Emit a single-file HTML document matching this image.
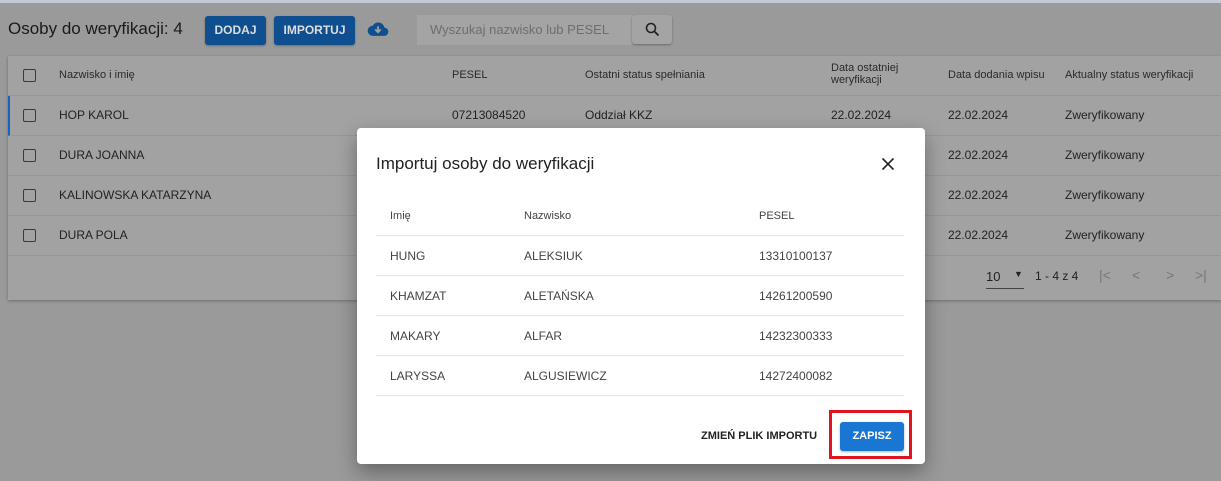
<!DOCTYPE html>
<html><head><meta charset="utf-8"><style>
*{box-sizing:border-box;margin:0;padding:0}
body{width:1221px;height:481px;overflow:hidden;background:#9a9a9a;font-family:"Liberation Sans",sans-serif;position:relative;color:#1f1f1f}
.a{position:absolute;white-space:nowrap}
.top{left:0;top:0;width:1221px;height:3px;background:#c5c8d6}
.btn{background:#0f4f8f;color:#ddd;font-weight:bold;font-size:12px;border-radius:3px;height:29px;line-height:29px;text-align:center;box-shadow:0 1px 2px rgba(0,0,0,.3)}
.card{left:8px;top:56px;width:1213px;height:244px;background:#a2a2a2;box-shadow:0 1px 3px rgba(0,0,0,.3)}
.row{position:absolute;left:0;width:1213px;border-bottom:1px solid #979797}
.cb{position:absolute;left:15px;width:13px;height:13px;border:1.5px solid #3a3a3a;border-radius:2px}
.t{position:absolute;font-size:12px;color:#222}
.h{font-size:11px;color:#2a2a2a}
.modal{left:357px;top:128px;width:568px;height:336px;background:#fff;border-radius:4px;box-shadow:0 8px 20px rgba(0,0,0,.35)}
.mr{position:absolute;left:19px;width:528px;border-bottom:1px solid #e6e6e6;height:40px}
.mt{position:absolute;font-size:12px;color:#444;top:13px}
</style></head><body>
<div class="a top"></div>
<div class="a" style="left:8px;top:19px;font-size:17px;color:#1a1a1a">Osoby do weryfikacji: 4</div>
<div class="a btn" style="left:205px;top:16px;width:61px">DODAJ</div>
<div class="a btn" style="left:274px;top:16px;width:81px">IMPORTUJ</div>
<svg class="a" style="left:367px;top:20px" width="22" height="18" viewBox="0 0 24 18"><path d="M19 7.5A7 7 0 0 0 6 5.5 5.5 5.5 0 0 0 6.5 16.5h12A4.5 4.5 0 0 0 19 7.5z" fill="#0f4f8f"/><path d="M12 6v6M9 9.5l3 3 3-3" stroke="#a0a0a0" stroke-width="2" fill="none"/></svg>
<div class="a" style="left:417px;top:15px;width:215px;height:30px;background:#a4a4a4"></div>
<div class="a" style="left:430px;top:22px;font-size:13px;color:#6e6e6e">Wyszukaj nazwisko lub PESEL</div>
<div class="a" style="left:632px;top:15px;width:40px;height:29px;background:#a4a4a4;border-radius:3px;box-shadow:0 1px 2px rgba(0,0,0,.3)"></div>
<svg class="a" style="left:645px;top:22px" width="15" height="15" viewBox="0 0 15 15"><circle cx="6" cy="6" r="4.5" stroke="#222" stroke-width="1.6" fill="none"/><path d="M9.5 9.5l4 4" stroke="#222" stroke-width="1.8"/></svg>
<div class="a card">
 <div class="row" style="top:0;height:40px"><div class="cb" style="top:13px"></div>
  <div class="t h" style="left:51px;top:13px">Nazwisko i imię</div><div class="t h" style="left:444px;top:13px">PESEL</div><div class="t h" style="left:577px;top:13px">Ostatni status spełniania</div><div class="t h" style="left:823px;top:6px;line-height:12px">Data ostatniej<br>weryfikacji</div><div class="t h" style="left:940px;top:13px">Data dodania wpisu</div><div class="t h" style="left:1057px;top:13px">Aktualny status weryfikacji</div></div>
 <div class="row" style="top:40px;height:40px;border-left:2px solid #1565c0"><div class="cb" style="top:13px;left:13px"></div><div class="t" style="left:49px;top:12px">HOP KAROL</div><div class="t" style="left:442px;top:12px">07213084520</div><div class="t" style="left:575px;top:12px">Oddział KKZ</div><div class="t" style="left:821px;top:12px">22.02.2024</div><div class="t" style="left:938px;top:12px">22.02.2024</div><div class="t" style="left:1055px;top:12px">Zweryfikowany</div></div>
 <div class="row" style="top:80px;height:40px"><div class="cb" style="top:13px"></div><div class="t" style="left:51px;top:12px">DURA JOANNA</div><div class="t" style="left:940px;top:12px">22.02.2024</div><div class="t" style="left:1057px;top:12px">Zweryfikowany</div></div>
 <div class="row" style="top:120px;height:40px"><div class="cb" style="top:13px"></div><div class="t" style="left:51px;top:12px">KALINOWSKA KATARZYNA</div><div class="t" style="left:940px;top:12px">22.02.2024</div><div class="t" style="left:1057px;top:12px">Zweryfikowany</div></div>
 <div class="row" style="top:160px;height:40px"><div class="cb" style="top:13px"></div><div class="t" style="left:51px;top:12px">DURA POLA</div><div class="t" style="left:940px;top:12px">22.02.2024</div><div class="t" style="left:1057px;top:12px">Zweryfikowany</div></div>
 <div class="t" style="left:978px;top:213px;font-size:13px">10</div>
 <div class="t" style="left:1006px;top:213px;font-size:9px">▼</div>
 <div class="a" style="left:978px;top:232px;width:38px;border-bottom:1px solid #444"></div>
 <div class="t" style="left:1027px;top:213px;font-size:12px">1 - 4 z 4</div>
 <div class="t" style="left:1091px;top:211px;font-size:14px;color:#777">|&lt;</div>
 <div class="t" style="left:1124px;top:211px;font-size:14px;color:#777">&lt;</div>
 <div class="t" style="left:1158px;top:211px;font-size:14px;color:#777">&gt;</div>
 <div class="t" style="left:1187px;top:211px;font-size:14px;color:#777">&gt;|</div>
</div>
<div class="a modal">
 <div class="a" style="left:19px;top:26px;font-size:17px;color:#222">Importuj osoby do weryfikacji</div>
 <svg class="a" style="left:524px;top:29px" width="14" height="14" viewBox="0 0 14 14"><path d="M1.5 1.5l11 11M12.5 1.5l-11 11" stroke="#222" stroke-width="1.6"/></svg>
 <div class="mr" style="top:68px"><div class="mt" style="left:14px;font-size:11px;top:14px">Imię</div><div class="mt" style="left:148px;font-size:11px;top:14px">Nazwisko</div><div class="mt" style="left:383px;font-size:11px;top:14px">PESEL</div></div>
 <div class="mr" style="top:108px"><div class="mt" style="left:14px">HUNG</div><div class="mt" style="left:148px">ALEKSIUK</div><div class="mt" style="left:383px">13310100137</div></div>
 <div class="mr" style="top:148px"><div class="mt" style="left:14px">KHAMZAT</div><div class="mt" style="left:148px">ALETAŃSKA</div><div class="mt" style="left:383px">14261200590</div></div>
 <div class="mr" style="top:188px"><div class="mt" style="left:14px">MAKARY</div><div class="mt" style="left:148px">ALFAR</div><div class="mt" style="left:383px">14232300333</div></div>
 <div class="mr" style="top:228px"><div class="mt" style="left:14px">LARYSSA</div><div class="mt" style="left:148px">ALGUSIEWICZ</div><div class="mt" style="left:383px">14272400082</div></div>
 <div class="a" style="left:344px;top:302px;font-size:11px;font-weight:bold;color:#222">ZMIEŃ PLIK IMPORTU</div>
 <div class="a" style="left:472px;top:282px;width:83px;height:49px;border:3px solid #e0141e"></div>
 <div class="a btn" style="left:483px;top:294px;width:64px;background:#1976d2;color:#fff;font-size:11px">ZAPISZ</div>
</div>
</body></html>
